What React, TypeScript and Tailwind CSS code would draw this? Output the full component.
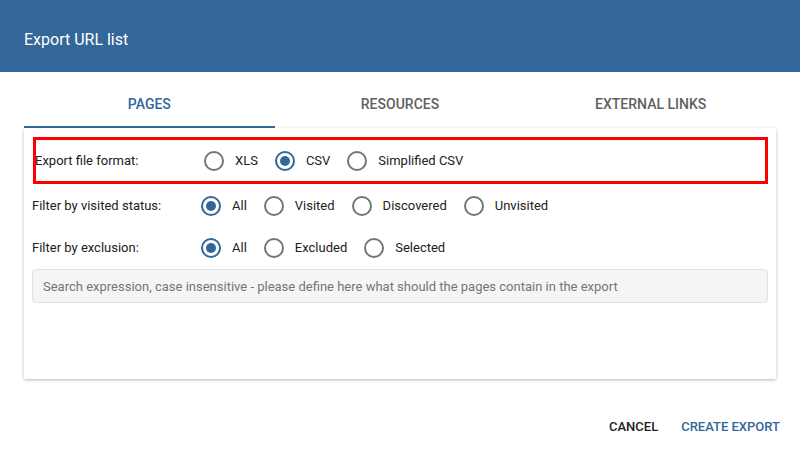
const options = {
  format: ["XLS", "CSV", "Simplified CSV"],
  visited: ["All", "Visited", "Discovered", "Unvisited"],
  exclusion: ["All", "Excluded", "Selected"],
};

function Radio({ label, checked }: { label: string; checked?: boolean }) {
  return (
    <label className="mr-[17px] flex items-center">
      <span
        className={
          checked
            ? "flex h-5 w-5 items-center justify-center rounded-full border-2 border-[#336699]"
            : "flex h-5 w-5 items-center justify-center rounded-full border-2 border-[#757575]"
        }
      >
        {checked && <span className="h-[10px] w-[10px] rounded-full bg-[#336699]" />}
      </span>
      <span className="ml-[11px] text-[13px] text-[#212121]">{label}</span>
    </label>
  );
}

function Row({ label, items, selected }: { label: string; items: string[]; selected: string }) {
  return (
    <div className="flex h-[42px] items-center pt-[2px]">
      <span className="w-[169px] text-[13px] text-[#212121]">{label}</span>
      {items.map((item) => (
        <Radio key={item} label={item} checked={item === selected} />
      ))}
    </div>
  );
}

export default function App() {
  return (
    <div className="h-[450px] w-[800px] overflow-hidden bg-white font-['Roboto',sans-serif]">
      <div className="flex h-[72px] items-center bg-[#336699] px-6 pt-[8px] text-[16px] text-white">
        Export URL list
      </div>

      <div className="px-6">
        <div className="grid h-[56px] grid-cols-3 text-[14px] font-medium uppercase">
          <div className="flex flex-col">
            <div className="flex flex-1 items-center justify-center pt-[10px] text-[#336699]">Pages</div>
            <div className="h-[2px] bg-[#336699]" />
          </div>
          <div className="flex items-center justify-center pt-[8px] text-[#616161]">Resources</div>
          <div className="flex items-center justify-center pt-[8px] text-[#616161]">External links</div>
        </div>

        <div className="h-[251px] bg-white px-2 pt-[9px] shadow-[0_1px_3px_rgba(0,0,0,0.28)]">
          <div className="ml-px flex h-[47px] items-center border-[3px] border-[#ff0000]">
            <span className="-ml-px w-[169px] text-[13px] text-[#212121]">Export file format:</span>
            {options.format.map((item) => (
              <Radio key={item} label={item} checked={item === "CSV"} />
            ))}
          </div>
          <Row label="Filter by visited status:" items={options.visited} selected="All" />
          <Row label="Filter by exclusion:" items={options.exclusion} selected="All" />
          <input
            className="mt-px h-[34px] w-full rounded-[4px] border border-[#e0e0e0] bg-[#f5f5f5] px-[10px] text-[13px] outline-none placeholder:text-[#757575]"
            placeholder="Search expression, case insensitive - please define here what should the pages contain in the export"
          />
        </div>
      </div>

      <div className="mt-[30px] flex justify-end gap-[7px] pr-[12px] text-[13px] font-medium uppercase">
        <button className="h-9 px-2 uppercase text-[#212121]">Cancel</button>
        <button className="h-9 px-2 uppercase text-[#336699]">Create export</button>
      </div>
    </div>
  );
}
